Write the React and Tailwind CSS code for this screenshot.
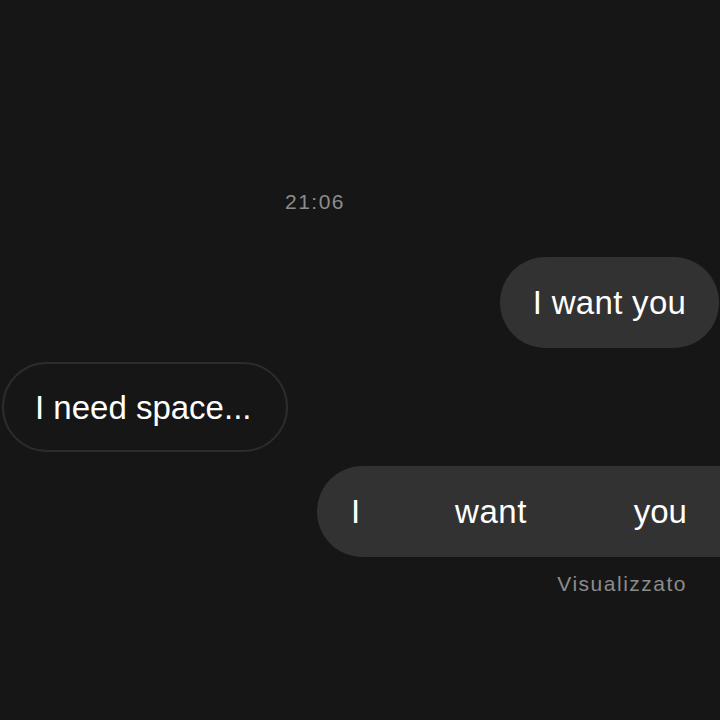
export default function App() {
  return (
    <div
      className="w-[720px] h-[720px] bg-[#161616] flex flex-col pt-[188px]"
      style={{ fontFamily: '"Liberation Sans", Arial, sans-serif' }}
    >
      <div className="flex justify-center pr-[90px]">
        <span className="text-[21px] leading-[28px] text-[#8c8c8c] tracking-[1.5px]">
          21:06
        </span>
      </div>

      <div className="mt-[41px] self-end mr-[1px] h-[91px] w-[219px] rounded-full bg-[#323232] flex items-center justify-center">
        <span className="text-[33px] text-white leading-none tracking-[0.3px]">I want you</span>
      </div>

      <div className="mt-[14px] ml-[2px] h-[90px] w-[286px] rounded-full border-2 border-[#2c2c2c] flex items-center pl-[31px]">
        <span className="text-[33px] text-white leading-none">I need space...</span>
      </div>

      <div className="mt-[14px] self-end h-[91px] w-[403px] rounded-l-full rounded-r-[46px] bg-[#323232] flex items-center justify-between pl-[34px] pr-[33px]">
        <span className="text-[33px] text-white leading-none">I</span>
        <span className="text-[33px] text-white leading-none mr-[12px] tracking-[0.5px]">want</span>
        <span className="text-[33px] text-white leading-none">you</span>
      </div>

      <div className="mt-[14px] self-end mr-[33px]">
        <span className="text-[21px] leading-[26px] text-[#8c8c8c] tracking-[1.5px]">
          Visualizzato
        </span>
      </div>
    </div>
  );
}
